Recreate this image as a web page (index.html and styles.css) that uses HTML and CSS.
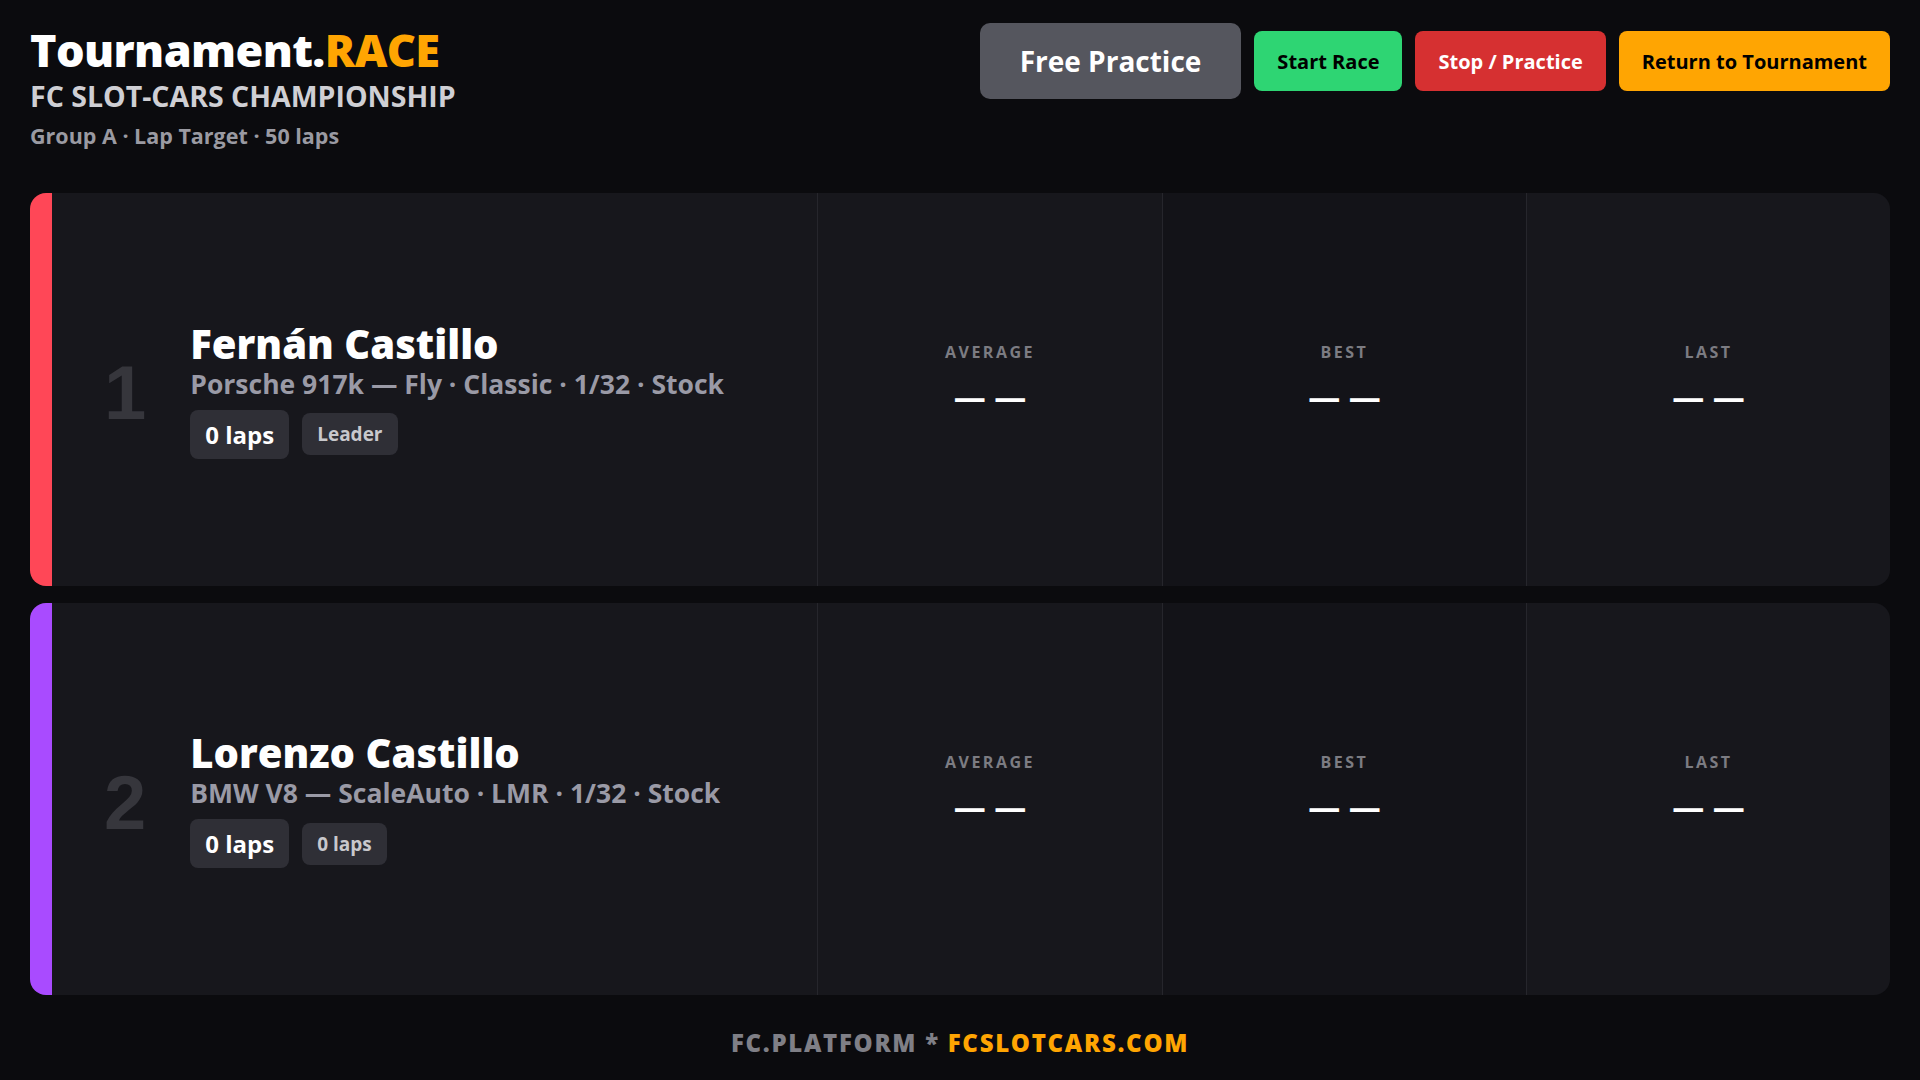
FILE: index.html
```html
<!DOCTYPE html>
<html lang="en">
<head>
  <meta charset="UTF-8" />
  <meta name="viewport" content="width=device-width, initial-scale=1.0"/>
  <title>Tournament.RACE</title>
  <link rel="stylesheet" href="styles.css">
</head>
<body>

  <!-- Top bar: title + race controls -->
  <header class="topbar">
    <div class="brand">
      <h1>Tournament.<span class="accent">RACE</span></h1>
      <div class="championship">FC SLOT-CARS CHAMPIONSHIP</div>
      <div class="meta">Group A · Lap Target · 50 laps</div>
    </div>

    <div class="controls">
      <button class="btn btn-practice">Free Practice</button>
      <button class="btn btn-start">Start Race</button>
      <button class="btn btn-stop">Stop / Practice</button>
      <button class="btn btn-return">Return to Tournament</button>
    </div>
  </header>

  <!-- Lanes -->
  <main class="lanes">
    <div class="lane lane-red">
      <div class="driver">
        <div class="pos">1</div>
        <div class="driver-info">
          <div class="driver-name">Fernán Castillo</div>
          <div class="car">Porsche 917k — Fly · Classic · 1/32 · Stock</div>
          <div class="tags">
            <span class="tag tag-laps">0 laps</span>
            <span class="tag">Leader</span>
          </div>
        </div>
      </div>
      <div class="stat">
        <div class="stat-label">AVERAGE</div>
        <div class="stat-value">— —</div>
      </div>
      <div class="stat stat-best">
        <div class="stat-label">BEST</div>
        <div class="stat-value">— —</div>
      </div>
      <div class="stat">
        <div class="stat-label">LAST</div>
        <div class="stat-value">— —</div>
      </div>
    </div>

    <div class="lane lane-purple">
      <div class="driver">
        <div class="pos">2</div>
        <div class="driver-info">
          <div class="driver-name">Lorenzo Castillo</div>
          <div class="car">BMW V8 — ScaleAuto · LMR · 1/32 · Stock</div>
          <div class="tags">
            <span class="tag tag-laps">0 laps</span>
            <span class="tag">0 laps</span>
          </div>
        </div>
      </div>
      <div class="stat">
        <div class="stat-label">AVERAGE</div>
        <div class="stat-value">— —</div>
      </div>
      <div class="stat stat-best">
        <div class="stat-label">BEST</div>
        <div class="stat-value">— —</div>
      </div>
      <div class="stat">
        <div class="stat-label">LAST</div>
        <div class="stat-value">— —</div>
      </div>
    </div>
  </main>

  <footer class="footer">
    FC.PLATFORM * <span class="accent">FCSLOTCARS.COM</span>
  </footer>

</body>
</html>
```

FILE: styles.css
```css
/* Page */
body {
  font-family: 'Open Sans', 'Noto Sans', sans-serif;
  margin: 0;
  background: #0b0b0e;
  color: #fff;
  min-height: 100vh;
  display: flex;
  flex-direction: column;
}

.accent {
  color: #ffa502;
}

/* Header */
.topbar {
  display: flex;
  justify-content: space-between;
  align-items: flex-start;
  padding: 23px 30px 0;
}

.brand h1 {
  margin: 0;
  margin-top: 1px;
  font-size: 45px;
  font-weight: 800;
  line-height: 52px;
  letter-spacing: -0.6px;
}

.championship {
  font-size: 28.5px;
  font-weight: 700;
  color: #cfcfd4;
  line-height: 34px;
  margin-top: 3px;
}

.meta {
  font-size: 21.5px;
  font-weight: 700;
  color: #9a9aa2;
  line-height: 28px;
  margin-top: 9px;
}

.controls {
  display: flex;
  align-items: center;
  gap: 13px;
}

.btn {
  font-family: inherit;
  font-weight: 700;
  font-size: 20px;
  border: none;
  border-radius: 8px;
  height: 60px;
  padding: 0 23px;
  cursor: pointer;
}

.btn-practice {
  background: #55565e;
  color: #fff;
  font-size: 28px;
  height: 76px;
  padding: 0 40px;
  border-radius: 10px;
}

.btn-start {
  background: #2ed573;
  color: #000;
}

.btn-stop {
  background: #d63031;
  color: #fff;
}

.btn-return {
  background: #ffa502;
  color: #000;
}

/* Lanes */
.lanes {
  flex: 1;
  display: flex;
  flex-direction: column;
  gap: 17px;
  padding: 0 30px;
  margin-top: 43px;
}

.lane {
  flex: 1;
  display: grid;
  grid-template-columns: 1fr 345px 364px 364px;
  background: #17171c;
  border-radius: 16px;
  border-left: 22px solid #ff4757;
  overflow: hidden;
}

.lane-red {
  border-left-color: #ff4757;
}

.lane-purple {
  border-left-color: #a94bff;
}

.driver {
  display: flex;
  align-items: center;
  padding-left: 52px;
  gap: 44px;
}

.pos {
  font-family: 'Liberation Sans', sans-serif;
  font-weight: 700;
  font-size: 76px;
  color: #36363c;
  line-height: 1;
  margin-top: 8px;
}

.driver-info {
  padding-top: 1px;
}

.driver-name {
  font-size: 40px;
  font-weight: 800;
  line-height: 46px;
}

.car {
  font-size: 26.5px;
  font-weight: 700;
  color: #9a9aa6;
  line-height: 34px;
}

.tags {
  display: flex;
  align-items: center;
  gap: 13px;
  margin-top: 9px;
}

.tag {
  background: #2f2f36;
  color: #c8c8cc;
  font-size: 19px;
  font-weight: 700;
  border-radius: 8px;
  padding: 0 15px;
  height: 42px;
  line-height: 42px;
}

.tag-laps {
  color: #fff;
  font-size: 24px;
  height: 49px;
  line-height: 49px;
}

.stat {
  border-left: 1px solid #26262c;
  display: flex;
  flex-direction: column;
  align-items: center;
  justify-content: center;
  padding-bottom: 24px;
}

.stat-best {
  background: #131318;
}

.stat-label {
  font-size: 16px;
  font-weight: 700;
  letter-spacing: 2.5px;
  color: #7c7c82;
}

.stat-value {
  font-size: 32px;
  font-weight: 700;
  line-height: 1;
  margin-top: 18px;
}

/* Footer */
.footer {
  text-align: center;
  font-size: 24px;
  font-weight: 800;
  letter-spacing: 1.7px;
  color: #7f7f86;
  padding: 31px 0 21px;
}
```
